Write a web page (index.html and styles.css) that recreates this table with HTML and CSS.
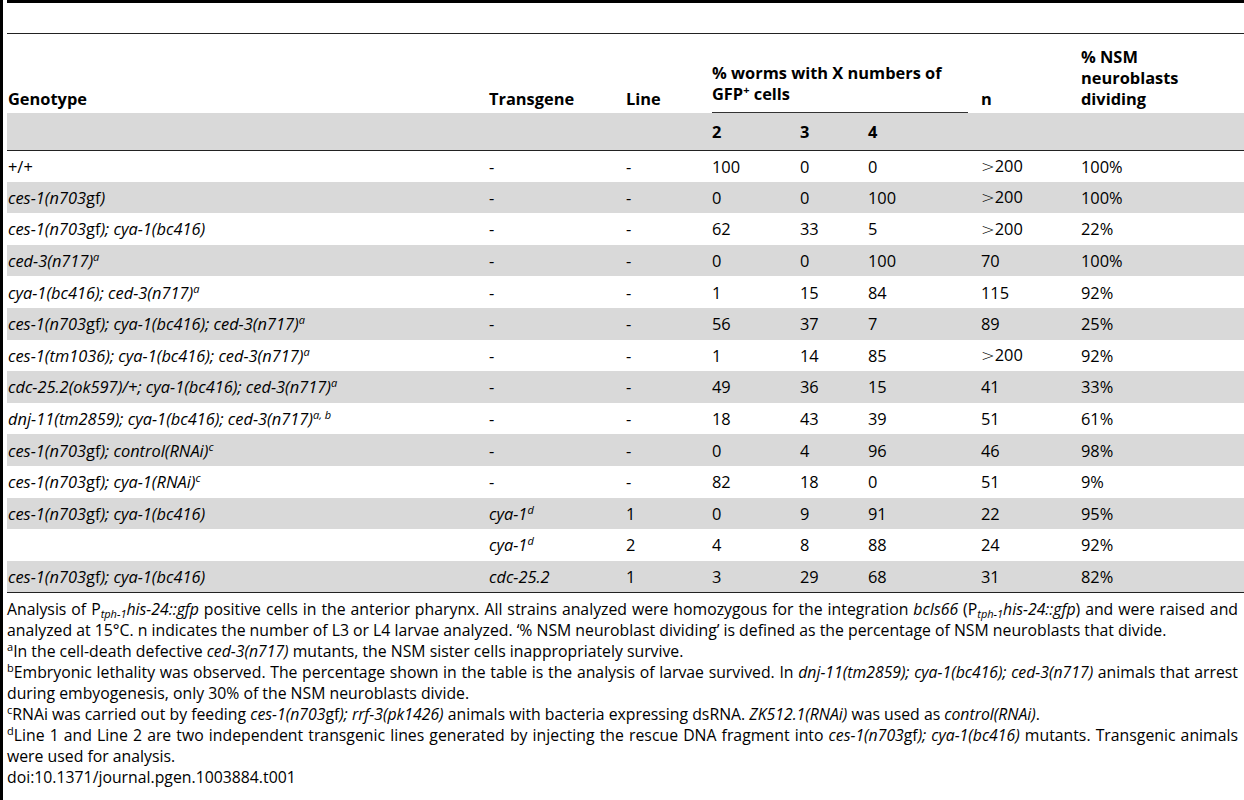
FILE: index.html
```html
<!DOCTYPE html>
<html lang="en">
<head>
  <meta charset="UTF-8">
  <title>Table 1</title>
  <link rel="stylesheet" href="styles.css">
</head>
<body>
  <div class="page">
    <div class="top-rule"></div>

    <table class="data-table">
      <colgroup>
        <col class="c-geno">
        <col class="c-trans">
        <col class="c-line">
        <col class="c-two">
        <col class="c-three">
        <col class="c-four">
        <col class="c-n">
        <col class="c-nsm">
      </colgroup>
      <thead>
        <tr class="head-main">
          <th>Genotype</th>
          <th>Transgene</th>
          <th>Line</th>
          <th colspan="3" class="group"><div class="group-label">% worms with X numbers of GFP<sup>+</sup> cells</div></th>
          <th>n</th>
          <th class="narrow">% NSM neuroblasts dividing</th>
        </tr>
        <tr class="head-sub">
          <th></th>
          <th></th>
          <th></th>
          <th>2</th>
          <th>3</th>
          <th>4</th>
          <th></th>
          <th></th>
        </tr>
      </thead>
      <tbody>
        <tr>
          <td>+/+</td><td>-</td><td>-</td><td>100</td><td>0</td><td>0</td><td><span class="gt">&gt;</span>200</td><td>100%</td>
        </tr>
        <tr class="shade">
          <td><i>ces-1(n703</i>gf<i>)</i></td><td>-</td><td>-</td><td>0</td><td>0</td><td>100</td><td><span class="gt">&gt;</span>200</td><td>100%</td>
        </tr>
        <tr>
          <td><i>ces-1(n703</i>gf<i>); cya-1(bc416)</i></td><td>-</td><td>-</td><td>62</td><td>33</td><td>5</td><td><span class="gt">&gt;</span>200</td><td>22%</td>
        </tr>
        <tr class="shade">
          <td><i>ced-3(n717)<sup>a</sup></i></td><td>-</td><td>-</td><td>0</td><td>0</td><td>100</td><td>70</td><td>100%</td>
        </tr>
        <tr>
          <td><i>cya-1(bc416); ced-3(n717)<sup>a</sup></i></td><td>-</td><td>-</td><td>1</td><td>15</td><td>84</td><td>115</td><td>92%</td>
        </tr>
        <tr class="shade">
          <td><i>ces-1(n703</i>gf<i>); cya-1(bc416); ced-3(n717)<sup>a</sup></i></td><td>-</td><td>-</td><td>56</td><td>37</td><td>7</td><td>89</td><td>25%</td>
        </tr>
        <tr>
          <td><i>ces-1(tm1036); cya-1(bc416); ced-3(n717)<sup>a</sup></i></td><td>-</td><td>-</td><td>1</td><td>14</td><td>85</td><td><span class="gt">&gt;</span>200</td><td>92%</td>
        </tr>
        <tr class="shade">
          <td><i>cdc-25.2(ok597)/+; cya-1(bc416); ced-3(n717)<sup>a</sup></i></td><td>-</td><td>-</td><td>49</td><td>36</td><td>15</td><td>41</td><td>33%</td>
        </tr>
        <tr>
          <td><i>dnj-11(tm2859); cya-1(bc416); ced-3(n717)<sup>a, b</sup></i></td><td>-</td><td>-</td><td>18</td><td>43</td><td>39</td><td>51</td><td>61%</td>
        </tr>
        <tr class="shade">
          <td><i>ces-1(n703</i>gf<i>); control(RNAi)<sup>c</sup></i></td><td>-</td><td>-</td><td>0</td><td>4</td><td>96</td><td>46</td><td>98%</td>
        </tr>
        <tr>
          <td><i>ces-1(n703</i>gf<i>); cya-1(RNAi)<sup>c</sup></i></td><td>-</td><td>-</td><td>82</td><td>18</td><td>0</td><td>51</td><td>9%</td>
        </tr>
        <tr class="shade">
          <td><i>ces-1(n703</i>gf<i>); cya-1(bc416)</i></td><td><i>cya-1<sup>d</sup></i></td><td>1</td><td>0</td><td>9</td><td>91</td><td>22</td><td>95%</td>
        </tr>
        <tr>
          <td></td><td><i>cya-1<sup>d</sup></i></td><td>2</td><td>4</td><td>8</td><td>88</td><td>24</td><td>92%</td>
        </tr>
        <tr class="shade">
          <td><i>ces-1(n703</i>gf<i>); cya-1(bc416)</i></td><td><i>cdc-25.2</i></td><td>1</td><td>3</td><td>29</td><td>68</td><td>31</td><td>82%</td>
        </tr>
      </tbody>
    </table>

    <div class="notes">
      <p>Analysis of P<sub>tph-1</sub><i>his-24::gfp</i> positive cells in the anterior pharynx. All strains analyzed were homozygous for the integration <i>bcIs66</i> (P<sub>tph-1</sub><i>his-24::gfp</i>) and were raised and analyzed at 15°C. n indicates the number of L3 or L4 larvae analyzed. ‘% NSM neuroblast dividing’ is defined as the percentage of NSM neuroblasts that divide.</p>
      <p><sup>a</sup>In the cell-death defective <i>ced-3(n717)</i> mutants, the NSM sister cells inappropriately survive.</p>
      <p><sup>b</sup>Embryonic lethality was observed. The percentage shown in the table is the analysis of larvae survived. In <i>dnj-11(tm2859); cya-1(bc416); ced-3(n717)</i> animals that arrest during embyogenesis, only 30% of the NSM neuroblasts divide.</p>
      <p><sup>c</sup>RNAi was carried out by feeding <i>ces-1(n703</i>gf<i>); rrf-3(pk1426)</i> animals with bacteria expressing dsRNA. <i>ZK512.1(RNAi)</i> was used as <i>control(RNAi)</i>.</p>
      <p><sup>d</sup>Line 1 and Line 2 are two independent transgenic lines generated by injecting the rescue DNA fragment into <i>ces-1(n703</i>gf<i>); cya-1(bc416)</i> mutants. Transgenic animals were used for analysis.</p>
      <p class="doi">doi:10.1371/journal.pgen.1003884.t001</p>
    </div>
  </div>
</body>
</html>
```

FILE: styles.css
```css
* {
  box-sizing: border-box;
}

body {
  margin: 0;
  background-color: #fff;
  color: #000;
  font-family: "Open Sans", "Noto Sans", Arial, sans-serif;
  font-size: 16.4px;
  line-height: 21px;
}

.page {
  min-height: 800px;
  border-left: 3px solid #000;
  padding-left: 4px;
}

.top-rule {
  height: 34px;
  border-top: 3px solid #000;
  border-bottom: 1px solid #222;
}

sup {
  font-size: 11px;
  line-height: 0;
  vertical-align: 6px;
}

sub {
  font-size: 11px;
  line-height: 0;
  vertical-align: -3px;
  font-style: italic;
}

.data-table {
  width: 100%;
  border-collapse: collapse;
  table-layout: fixed;
}

.c-geno { width: 481px; }
.c-trans { width: 137px; }
.c-line { width: 86px; }
.c-two { width: 88px; }
.c-three { width: 68px; }
.c-four { width: 113px; }
.c-n { width: 100px; }
.c-nsm { width: auto; }

.data-table th,
.data-table td {
  text-align: left;
  padding: 0 0 0 1px;
}

.data-table th {
  font-weight: bold;
}

.head-main th {
  height: 79px;
  vertical-align: bottom;
  padding-bottom: 4px;
}

.head-main th.group {
  padding-bottom: 0;
  padding-right: 12px;
}

.head-main th.narrow {
  padding-right: 50px;
}

.group-label {
  border-bottom: 1px solid #333;
  padding-bottom: 8px;
}

.head-sub th {
  height: 37px;
  background-color: #d9d9d9;
  vertical-align: middle;
  border-bottom: 1px solid #222;
}

.data-table td {
  height: 31.6px;
  vertical-align: middle;
}

.data-table tbody tr:last-child td {
  border-bottom: 1px solid #222;
}

.shade td {
  background-color: #d9d9d9;
}

.gt {
  font-family: "DejaVu Sans", sans-serif;
  font-weight: 200;
}

.notes {
  padding-top: 6px;
  padding-right: 6px;
  font-size: 15.8px;
}

.notes p {
  margin: 0;
  text-align: justify;
}
```
